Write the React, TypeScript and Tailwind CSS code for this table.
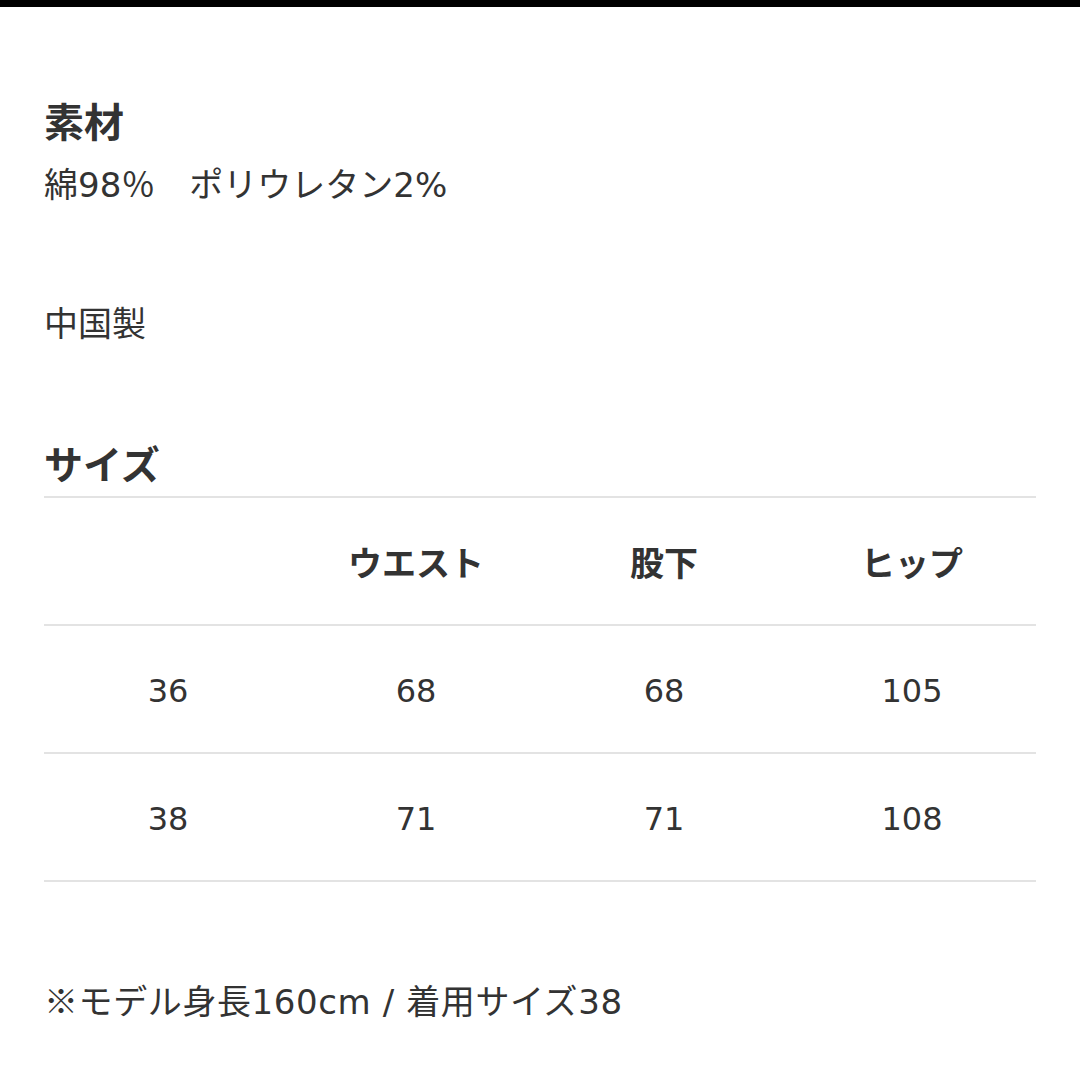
export default function App() {
  const rows = [
    ["36", "68", "68", "105"],
    ["38", "71", "71", "108"],
  ];
  return (
    <div className="w-[1080px] h-[1080px] bg-white text-[#333333] overflow-hidden font-['DejaVu_Sans','Noto_Sans_CJK_JP',sans-serif]">
      <div className="h-[7px] bg-black" />
      <div className="px-[44px]">
        <div className="mt-[89px] text-[40px] leading-[48px] font-bold font-['Noto_Sans_CJK_JP',sans-serif]">素材</div>
        <div className="mt-[17px] text-[34px] leading-[48px]">綿98％　ポリウレタン2%</div>
        <div className="mt-[89px] text-[34px] leading-[48px] font-['Noto_Sans_CJK_JP',sans-serif]">中国製</div>
        <div className="mt-[92px] text-[39px] leading-[48px] font-bold font-['Noto_Sans_CJK_JP',sans-serif]">サイズ</div>
        <div className="mt-[10px] border-t-2 border-[#e3e3e3]">
          <div className="grid grid-cols-4 h-[128px] items-center border-b-2 border-[#e3e3e3] text-[34px] font-bold text-center font-['Noto_Sans_CJK_JP',sans-serif]">
            <div />
            <div>ウエスト</div>
            <div>股下</div>
            <div>ヒップ</div>
          </div>
          {rows.map((r, i) => (
            <div key={i} className="grid grid-cols-4 h-[128px] items-center border-b-2 border-[#e3e3e3] text-[32px] text-center pt-[3px]">
              {r.map((c, j) => (
                <div key={j}>{c}</div>
              ))}
            </div>
          ))}
        </div>
        <div className="mt-[94px] text-[34px] leading-[48px] tracking-[0.6px]">
          <span className="font-['Noto_Sans_CJK_JP',sans-serif]">※</span>モデル身長160cm / 着用サイズ38
        </div>
      </div>
    </div>
  );
}
